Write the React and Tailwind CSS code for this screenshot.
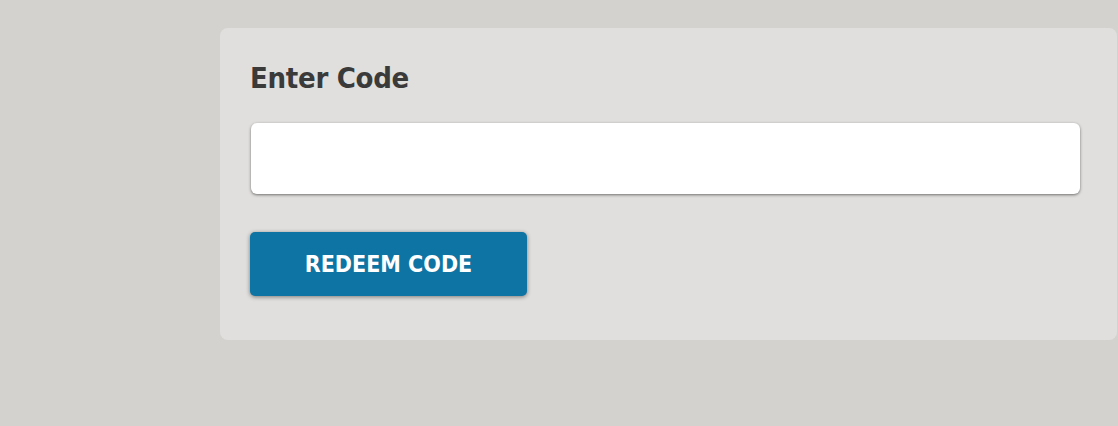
import React, { useState } from "react";

export default function App() {
  const [code, setCode] = useState("");

  return (
    <div
      className="w-[1118px] h-[426px] bg-[#d3d2cf] pt-[28px] pl-[220px] overflow-hidden"
      style={{ fontFamily: '"DejaVu Sans Condensed", "DejaVu Sans", Verdana, sans-serif' }}
    >
      <div className="w-[897px] h-[312px] bg-[#e0dfdd] rounded-[8px] pl-[30px] pr-[37px] pt-[32px]">
        <h2 className="text-[29px] leading-[36px] font-bold text-[#3a3a3a] tracking-[-0.3px]">
          Enter Code
        </h2>
        <input
          value={code}
          onChange={(e) => setCode(e.target.value)}
          className="mt-[27px] ml-[1px] block w-[829px] h-[71px] bg-white rounded-[6px] outline-none px-4 shadow-[0_1px_3px_rgba(0,0,0,0.5)]"
        />
        <button
          type="submit"
          className="mt-[38px] w-[277px] h-[64px] bg-[#0e74a3] text-white text-[23px] font-bold rounded-[5px] shadow-[0_1px_4px_rgba(0,0,0,0.45)]"
        >
          REDEEM CODE
        </button>
      </div>
    </div>
  );
}
